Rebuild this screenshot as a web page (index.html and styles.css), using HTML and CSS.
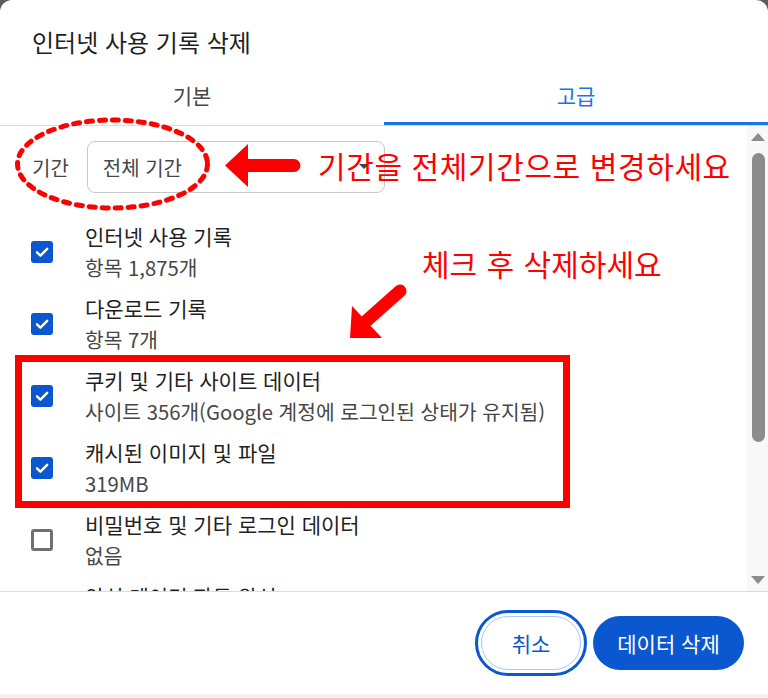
FILE: index.html
```html
<!DOCTYPE html>
<html lang="ko">
<head>
<meta charset="utf-8">
<title>인터넷 사용 기록 삭제</title>
<link rel="stylesheet" href="styles.css">
</head>
<body>
<div class="dialog">
  <div class="dialog-title">인터넷 사용 기록 삭제</div>

  <div class="tabs">
    <div class="tab">기본</div>
    <div class="tab active">고급</div>
  </div>

  <div class="body">
    <div class="content">
      <div class="period">
        <span class="period-label">기간</span>
        <div class="select">전체 기간<span class="select-arrow"></span></div>
      </div>

      <div class="items">
        <div class="item">
          <span class="checkbox checked"><svg viewBox="0 0 22 22"><path d="M6 11.3l3.4 3.4L16.2 7.8"/></svg></span>
          <div class="item-text">
            <div class="item-title">인터넷 사용 기록</div>
            <div class="item-sub">항목 1,875개</div>
          </div>
        </div>
        <div class="item">
          <span class="checkbox checked"><svg viewBox="0 0 22 22"><path d="M6 11.3l3.4 3.4L16.2 7.8"/></svg></span>
          <div class="item-text">
            <div class="item-title">다운로드 기록</div>
            <div class="item-sub">항목 7개</div>
          </div>
        </div>
        <div class="item">
          <span class="checkbox checked"><svg viewBox="0 0 22 22"><path d="M6 11.3l3.4 3.4L16.2 7.8"/></svg></span>
          <div class="item-text">
            <div class="item-title">쿠키 및 기타 사이트 데이터</div>
            <div class="item-sub">사이트 356개(Google 계정에 로그인된 상태가 유지됨)</div>
          </div>
        </div>
        <div class="item">
          <span class="checkbox checked"><svg viewBox="0 0 22 22"><path d="M6 11.3l3.4 3.4L16.2 7.8"/></svg></span>
          <div class="item-text">
            <div class="item-title">캐시된 이미지 및 파일</div>
            <div class="item-sub">319MB</div>
          </div>
        </div>
        <div class="item">
          <span class="checkbox"></span>
          <div class="item-text">
            <div class="item-title">비밀번호 및 기타 로그인 데이터</div>
            <div class="item-sub">없음</div>
          </div>
        </div>
        <div class="item">
          <span class="checkbox"></span>
          <div class="item-text">
            <div class="item-title">양식 데이터 자동 완성</div>
            <div class="item-sub">없음</div>
          </div>
        </div>
      </div>
    </div>

    <div class="scrollbar">
      <span class="sb-up"></span>
      <span class="sb-thumb"></span>
      <span class="sb-down"></span>
    </div>
  </div>

  <div class="footer">
    <button class="btn btn-cancel">취소</button>
    <button class="btn btn-primary">데이터 삭제</button>
  </div>
  <div class="bottom-edge"></div>

  <!-- 빨간 안내 표시 -->
  <div class="overlay">
    <svg class="marks" width="768" height="698" viewBox="0 0 768 698">
      <ellipse cx="112.5" cy="164" rx="95" ry="44" fill="none" stroke="#ff0000" stroke-width="5" stroke-dasharray="6 7" stroke-linecap="round"/>
      <line x1="246" y1="165.5" x2="294" y2="165.5" stroke="#ff0000" stroke-width="13" stroke-linecap="round"/>
      <polygon points="225,165.5 248,144 248,187" fill="#ff0000"/>
      <line x1="364" y1="323" x2="400" y2="291" stroke="#ff0000" stroke-width="13" stroke-linecap="round"/>
      <polygon points="350,338 352,306 382,338" fill="#ff0000"/>
      <rect x="18.5" y="358.5" width="548" height="146" fill="none" stroke="#ff0000" stroke-width="7"/>
    </svg>
    <div class="note note-period">기간을 전체기간으로 변경하세요</div>
    <div class="note note-check">체크 후 삭제하세요</div>
  </div>
</div>
</body>
</html>
```

FILE: styles.css
```css
* {
margin: 0;
padding: 0;
box-sizing: border-box;
}

body {
background-color: #5c5c5c;
font-family: "Noto Sans CJK KR", "Noto Sans", sans-serif;
color: #1f1f1f;
}

.dialog {
position: relative;
width: 768px;
height: 698px;
background-color: #fff;
border-radius: 12px 12px 0 0;
overflow: hidden;
display: flex;
flex-direction: column;
}

.dialog-title {
height: 68px;
padding: 27px 32px 0;
font-size: 24px;
line-height: 30px;
color: #1f1f1f;
}

.tabs {
display: flex;
border-bottom: 1px solid #dadada;
}

.tab {
flex: 1;
height: 57px;
display: flex;
align-items: center;
justify-content: center;
border-bottom: 3px solid transparent;
font-size: 21px;
color: #474747;
}

.tab.active {
color: #1a73e8;
border-bottom-color: #1a73e8;
}

.body {
flex: 1;
display: flex;
overflow: hidden;
}

.content {
flex: 1;
overflow: hidden;
}

.period {
display: flex;
align-items: center;
gap: 18px;
padding: 15px 0 0 32px;
}

.period-label {
font-size: 20px;
color: #474747;
}

.select {
position: relative;
width: 298px;
height: 52px;
border: 1px solid #c7c7c7;
border-radius: 8px;
padding-left: 15px;
display: flex;
align-items: center;
font-size: 20px;
color: #474747;
}

.select-arrow {
position: absolute;
right: 15px;
top: 22px;
border-left: 5px solid transparent;
border-right: 5px solid transparent;
border-top: 5px solid #444;
}

.items {
margin-top: 23px;
}

.item {
display: flex;
align-items: center;
gap: 32px;
height: 72px;
padding-left: 31px;
}

.checkbox {
width: 22px;
height: 22px;
flex-shrink: 0;
border: 3px solid #707070;
border-radius: 3px;
}

.checkbox.checked {
border: none;
background-color: #0b57d0;
}

.checkbox svg {
display: block;
width: 22px;
height: 22px;
fill: none;
stroke: #fff;
stroke-width: 2.4;
stroke-linecap: round;
stroke-linejoin: round;
}

.item-title {
font-size: 21px;
line-height: 31px;
color: #1f1f1f;
}

.item-sub {
font-size: 20.3px;
line-height: 31px;
color: #474747;
}

.scrollbar {
width: 21px;
background-color: #f8f8f8;
display: flex;
flex-direction: column;
align-items: center;
padding: 7px 0 7px 1px;
}

.sb-up {
border-left: 7px solid transparent;
border-right: 7px solid transparent;
border-bottom: 8px solid #8c8c8c;
}

.sb-thumb {
width: 13px;
height: 289px;
margin-top: 12px;
border-radius: 7px;
background-color: #8c8c8c;
}

.sb-down {
margin-top: auto;
border-left: 7px solid transparent;
border-right: 7px solid transparent;
border-top: 8px solid #8c8c8c;
}

.footer {
height: 103px;
border-top: 1px solid #dcdcdc;
display: flex;
align-items: center;
justify-content: flex-end;
gap: 12px;
padding-right: 24px;
}

.btn {
height: 54px;
border-radius: 27px;
font-family: inherit;
font-size: 21px;
cursor: pointer;
}

.btn-cancel {
width: 100px;
background-color: #fff;
color: #0b57d0;
border: 1px solid #a8c7fa;
outline: 3px solid #0b57d0;
outline-offset: 3px;
}

.btn-primary {
width: 151px;
background-color: #0b57d0;
color: #fff;
border: none;
}

.bottom-edge {
height: 4px;
background-color: #f3f3f3;
}

.overlay {
position: absolute;
top: 0;
left: 0;
width: 768px;
height: 698px;
pointer-events: none;
}

.marks {
position: absolute;
top: 0;
left: 0;
}

.note {
position: absolute;
font-size: 30px;
line-height: 36px;
color: #ff0000;
white-space: nowrap;
}

.note-period {
left: 318px;
top: 147px;
letter-spacing: 0.6px;
}

.note-check {
left: 422px;
top: 245px;
word-spacing: 1px;
}
```
